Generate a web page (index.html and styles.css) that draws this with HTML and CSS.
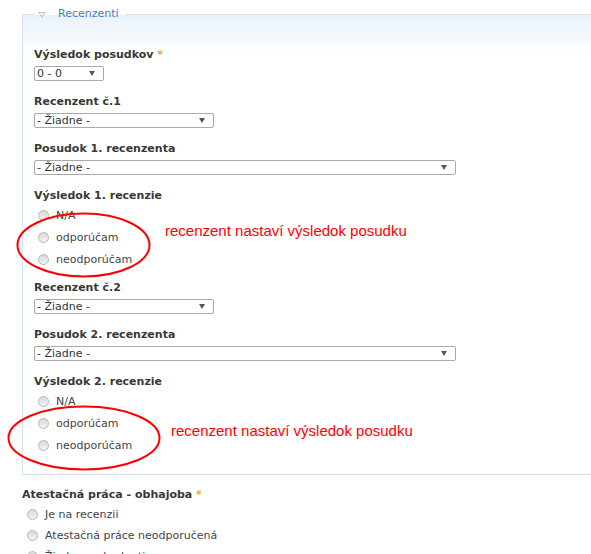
FILE: index.html
```html
<!DOCTYPE html>
<html lang="sk">
<head>
<meta charset="utf-8">
<title>Recenzenti</title>
<link rel="stylesheet" href="styles.css">
</head>
<body>
<fieldset class="group">
  <legend class="group-legend"><span class="toggle"></span>Recenzenti</legend>

  <div class="field">
    <div class="label">Výsledok posudkov <span class="req">*</span></div>
    <div class="select w-small"><span>0 - 0</span><i class="arrow"></i></div>
  </div>

  <div class="field">
    <div class="label">Recenzent č.1</div>
    <div class="select w-medium"><span>- Žiadne -</span><i class="arrow"></i></div>
  </div>

  <div class="field">
    <div class="label">Posudok 1. recenzenta</div>
    <div class="select w-large"><span>- Žiadne -</span><i class="arrow"></i></div>
  </div>

  <div class="field field-radios">
    <div class="label">Výsledok 1. recenzie</div>
    <div class="radios">
      <div class="radio"><span class="dot"></span>N/A</div>
      <div class="radio"><span class="dot"></span>odporúčam</div>
      <div class="radio"><span class="dot"></span>neodporúčam</div>
      <svg class="ring ring-1" width="137" height="68" viewBox="0 0 137 68"><ellipse cx="68.5" cy="34" rx="66" ry="31.5" fill="none" stroke="#f00" stroke-width="2"/></svg>
      <div class="note note-1">recenzent nastaví výsledok posudku</div>
    </div>
  </div>

  <div class="field">
    <div class="label">Recenzent č.2</div>
    <div class="select w-medium"><span>- Žiadne -</span><i class="arrow"></i></div>
  </div>

  <div class="field">
    <div class="label">Posudok 2. recenzenta</div>
    <div class="select w-large"><span>- Žiadne -</span><i class="arrow"></i></div>
  </div>

  <div class="field field-radios last">
    <div class="label">Výsledok 2. recenzie</div>
    <div class="radios">
      <div class="radio"><span class="dot"></span>N/A</div>
      <div class="radio"><span class="dot"></span>odporúčam</div>
      <div class="radio"><span class="dot"></span>neodporúčam</div>
      <svg class="ring ring-2" width="156" height="68" viewBox="0 0 156 68"><ellipse cx="78" cy="34" rx="75.5" ry="31.5" fill="none" stroke="#f00" stroke-width="2"/></svg>
      <div class="note note-2">recenzent nastaví výsledok posudku</div>
    </div>
  </div>
</fieldset>

<div class="field outer">
  <div class="label">Atestačná práca - obhajoba <span class="req">*</span></div>
  <div class="radios tight">
    <div class="radio"><span class="dot"></span>Je na recenzii</div>
    <div class="radio"><span class="dot"></span>Atestačná práce neodporučená</div>
    <div class="radio"><span class="dot"></span>Žiadne rozhodnutie</div>
  </div>
</div>
</body>
</html>
```

FILE: styles.css
```css
html, body {
  margin: 0;
  padding: 0;
  overflow: hidden;
  background: #fff;
}

body {
  font-family: "DejaVu Sans", Verdana, sans-serif;
  font-size: 11px;
  color: #3b3b3b;
  padding-left: 22px;
}

.group {
  margin: 6px -30px 0 0;
  padding: 24px 0 18px 11px;
  border: 1px solid #d3e3f2;
  background: linear-gradient(to bottom, #e8f1fb 0, #ffffff 38px);
  min-width: 0;
}

.group-legend {
  margin-left: 0;
  padding: 0 6px 0 4px;
  line-height: 16px;
  color: #3d7ec6;
  display: flex;
  align-items: center;
}

.toggle {
  width: 0;
  height: 0;
  border-left: 4px solid transparent;
  border-right: 4px solid transparent;
  border-top: 6px solid #c6c6c6;
  position: relative;
  margin-right: 12px;
  margin-top: 2px;
}
.toggle::after {
  content: "";
  position: absolute;
  left: -2px;
  top: -5px;
  border-left: 2px solid transparent;
  border-right: 2px solid transparent;
  border-top: 3px solid #fff;
}

.field {
  margin-bottom: 12px;
}

.label {
  font-weight: bold;
  line-height: 18px;
  color: #383838;
}

.req {
  color: #f5a623;
}

.select {
  box-sizing: border-box;
  margin-top: 2px;
  height: 15px;
  border: 1px solid #a9a9a9;
  border-radius: 2px;
  background: #fff;
  display: flex;
  align-items: center;
  justify-content: space-between;
  padding: 0 8px 0 2px;
  line-height: 13px;
  color: #333;
}

.w-small { width: 70px; }
.w-medium { width: 180px; }
.w-large { width: 422px; }

.arrow {
  width: 0;
  height: 0;
  border-left: 3px solid transparent;
  border-right: 3px solid transparent;
  border-top: 5px solid #555;
}

.field-radios {
  margin-bottom: 9px;
}
.field-radios.last {
  margin-bottom: 0;
}

.radios {
  position: relative;
  margin-top: -1px;
}

.radio {
  height: 22px;
  display: flex;
  align-items: center;
  padding-left: 4px;
  color: #444;
}

.tight .radio {
  height: 21px;
  padding-left: 5px;
}
.tight {
  margin-top: 0;
}

.dot {
  box-sizing: border-box;
  width: 11px;
  height: 11px;
  border-radius: 50%;
  border: 1px solid #b8b8b8;
  background: linear-gradient(to bottom, #d9d9d9, #f3f3f3);
  margin-right: 7px;
  flex: none;
}

.ring {
  position: absolute;
  pointer-events: none;
}
.ring-1 { left: -19px; top: 7px; }
.ring-2 { left: -28px; top: 14px; }

.note {
  position: absolute;
  font-family: "Liberation Sans", Arial, sans-serif;
  font-size: 15px;
  line-height: 18px;
  color: #f00;
  white-space: nowrap;
}
.note-1 { left: 131px; top: 18px; }
.note-2 { left: 137px; top: 32px; }

.outer {
  margin-top: 11px;
}
```
